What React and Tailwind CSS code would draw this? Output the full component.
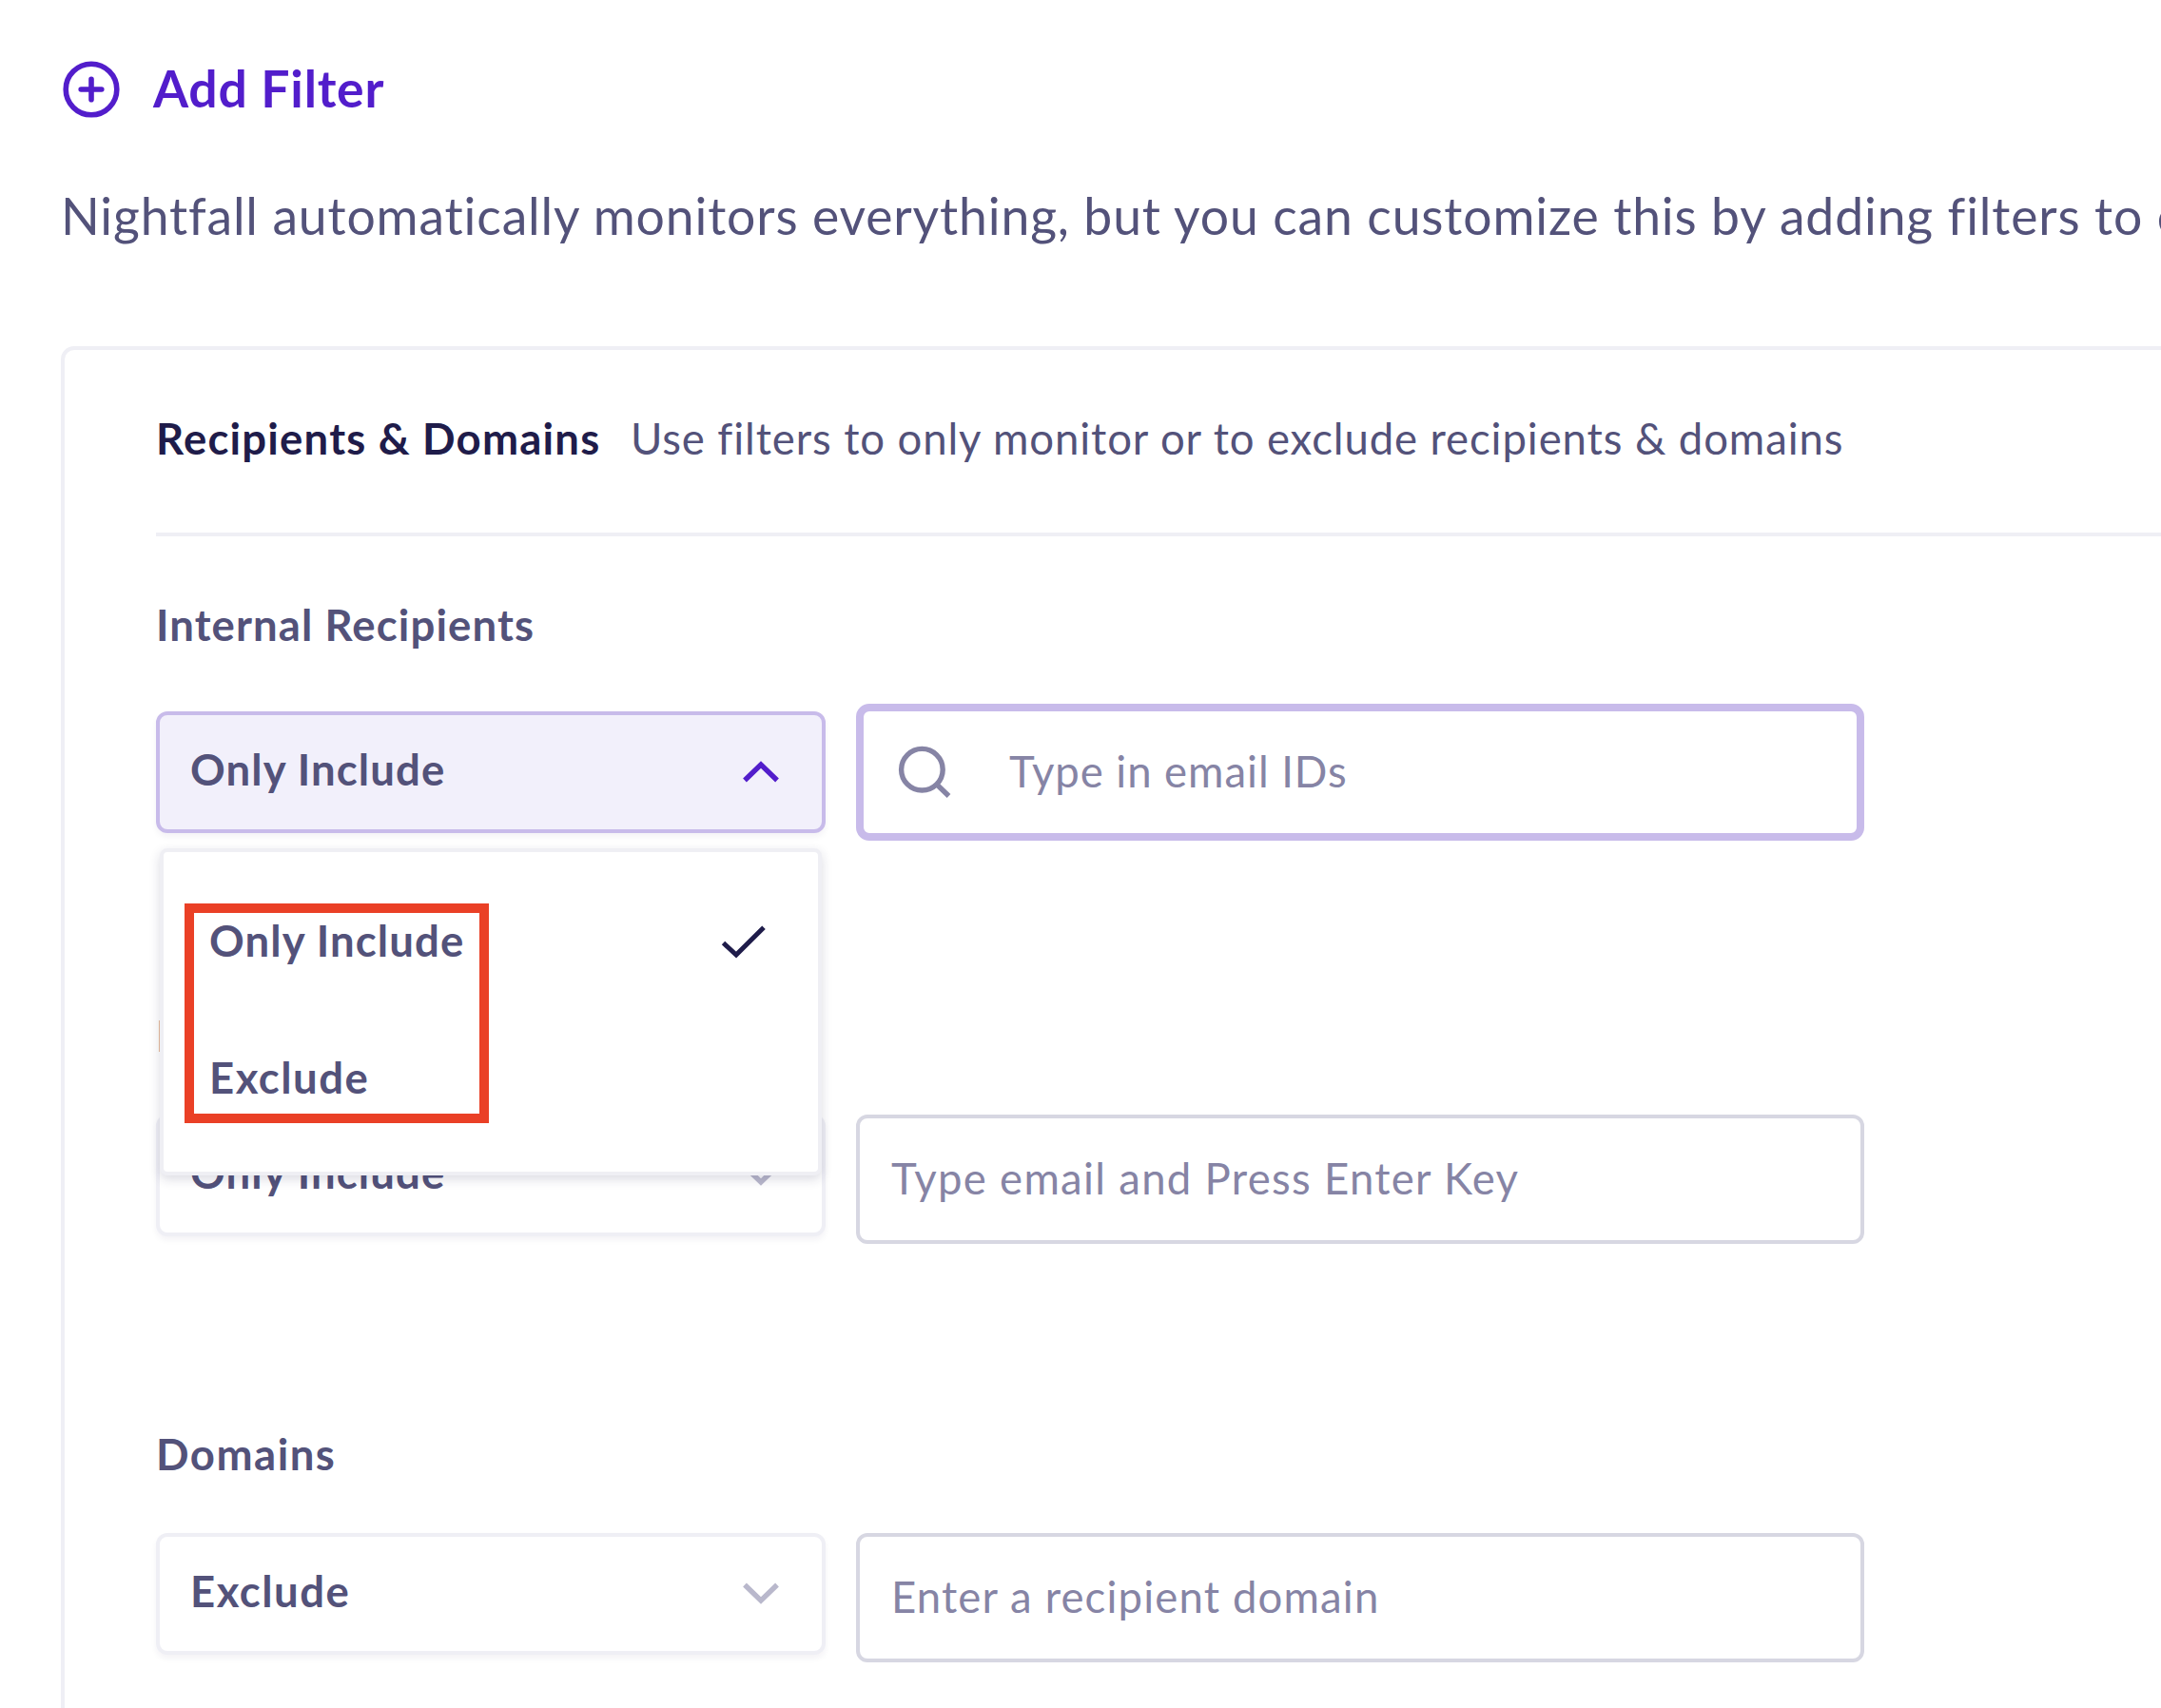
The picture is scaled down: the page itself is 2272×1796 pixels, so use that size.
import React from "react";

const INK = "text-[#53527a]";

function PlusCircle() {
  return (
    <svg className="mt-1 size-[60px] shrink-0" viewBox="0 0 60 60" fill="none" stroke="#521dcb" strokeWidth="5.6">
      <circle cx="30" cy="30" r="26.8" />
      <path d="M30 19.2v21.6M19.2 30h21.6" strokeLinecap="round" />
    </svg>
  );
}

function Chevron({ up }) {
  return (
    <svg className="h-[30px] w-[40px] shrink-0" viewBox="0 0 40 30" fill="none" strokeWidth="5.4" stroke={up ? "#521dcb" : "#b9b8cc"}>
      <path d={up ? "M3 23.5L20 7L37 23.5" : "M3 6.5L20 23L37 6.5"} />
    </svg>
  );
}

function Check() {
  return (
    <svg className="h-[36px] w-[48px] shrink-0" viewBox="0 0 48 36" fill="none" stroke="#1f1c4a" strokeWidth="5">
      <path d="M2.5 18.5L16 31L45 2.2" />
    </svg>
  );
}

function SearchIcon() {
  return (
    <svg className="mt-[2px] h-[56px] w-[56px] shrink-0" viewBox="0 0 56 56" fill="none" stroke="#8684a5" strokeWidth="5.4">
      <circle cx="25.4" cy="25.2" r="21.8" />
      <path d="M40.5 40.5L53.5 53" />
    </svg>
  );
}

function Label({ children, className }) {
  return <div className={`h-14 text-[45.5px] leading-[58px] font-bold ${INK} ${className}`}>{children}</div>;
}

function Select({ value, open, tracking, children }) {
  return (
    <div className="relative shrink-0">
      <div
        className={`flex h-32 w-[704px] items-start justify-between rounded-[12px] border-4 pt-7 pr-[44px] pl-8 ${
          open ? "border-[#c8bbea] bg-[#f2f0fb]" : "border-[#efeff5] bg-white"
        } shadow-[0_4px_6px_rgba(30,28,74,0.05)]`}
      >
        <span className={`text-[45.5px] leading-[58px] font-bold ${INK} ${tracking}`}>{value}</span>
        <div className={open ? "mt-[17px]" : "mt-4"}>
          <Chevron up={open} />
        </div>
      </div>
      {children}
    </div>
  );
}

function Menu() {
  return (
    <div className="absolute top-36 left-1 z-10 h-[344px] w-[696px] rounded-[8px] border-4 border-[#efeff4] bg-white pt-16 pr-[54px] pl-[48px] shadow-[0_4px_12px_rgba(30,28,74,0.16)]">
      <div className="flex h-14 items-start justify-between">
        <span className={`text-[45.5px] leading-[58px] font-bold tracking-[1.1px] ${INK}`}>Only Include</span>
        <div className="mt-[13px]">
          <Check />
        </div>
      </div>
      <div className={`mt-[88px] h-14 text-[45.5px] leading-[58px] font-bold tracking-[1.5px] ${INK}`}>Exclude</div>
      <div className="absolute top-[54px] left-[22px] h-[231px] w-[320px] border-[10px] border-[#ea4026]" />
    </div>
  );
}

function Input({ placeholder, tracking }) {
  return (
    <div className={`h-[136px] w-[1060px] shrink-0 rounded-[12px] border-4 border-[#d7d7e2] bg-white pt-[34px] pl-[33px] text-[45.5px] leading-[58px] text-[#8684a5] ${tracking}`}>
      {placeholder}
    </div>
  );
}

export default function App() {
  return (
    <div className="h-[1796px] w-[2272px] overflow-hidden bg-white font-['Lato',sans-serif] whitespace-nowrap">
      <div className="flex h-[124px] items-start gap-[35px] pt-[60px] pl-[66px]">
        <PlusCircle />
        <span className="text-[53.5px] leading-16 font-bold tracking-[0.75px] text-[#521dcb]">Add Filter</span>
      </div>
      <p className={`mt-[70px] h-16 pl-[64px] text-[53.5px] leading-16 tracking-[0.85px] ${INK}`}>
        Nightfall automatically monitors everything, but you can customize this by adding filters to e
      </p>

      <section className="mt-[106px] ml-16 h-[1440px] rounded-tl-[14px] border-t-4 border-l-4 border-[#efeff5] pt-16 pl-24">
        <div className="flex h-[132px] border-b-4 border-[#efeff5] text-[45.5px] leading-[58px]">
          <h2 className="w-[499px] shrink-0 font-bold tracking-[1.2px] text-[#1f1c4a]">Recipients &amp; Domains</h2>
          <p className={`tracking-[0.9px] ${INK}`}>Use filters to only monitor or to exclude recipients &amp; domains</p>
        </div>

        <Label className="mt-16 tracking-[1.1px]">Internal Recipients</Label>
        <div className="mt-14 flex h-36 items-center gap-8">
          <Select value="Only Include" tracking="tracking-[1.1px]" open>
            <Menu />
          </Select>
          <div className="flex h-36 w-[1060px] items-start rounded-[14px] border-8 border-[#c8bbea] bg-white pt-[34px] pl-[36px]">
            <SearchIcon />
            <span className="ml-[61px] text-[45.5px] leading-[58px] tracking-[0.95px] text-[#8684a5]">Type in email IDs</span>
          </div>
        </div>

        <Label className="mt-44 tracking-[1.1px]">External Recipients</Label>
        <div className="mt-14 flex items-start gap-8">
          <Select value="Only Include" tracking="tracking-[1.1px]" />
          <Input placeholder="Type email and Press Enter Key" tracking="tracking-[1.3px]" />
        </div>

        <Label className="mt-48 tracking-[1.5px]">Domains</Label>
        <div className="mt-14 flex items-start gap-8">
          <Select value="Exclude" tracking="tracking-[1.5px]" />
          <Input placeholder="Enter a recipient domain" tracking="tracking-[1.15px]" />
        </div>
      </section>
    </div>
  );
}
